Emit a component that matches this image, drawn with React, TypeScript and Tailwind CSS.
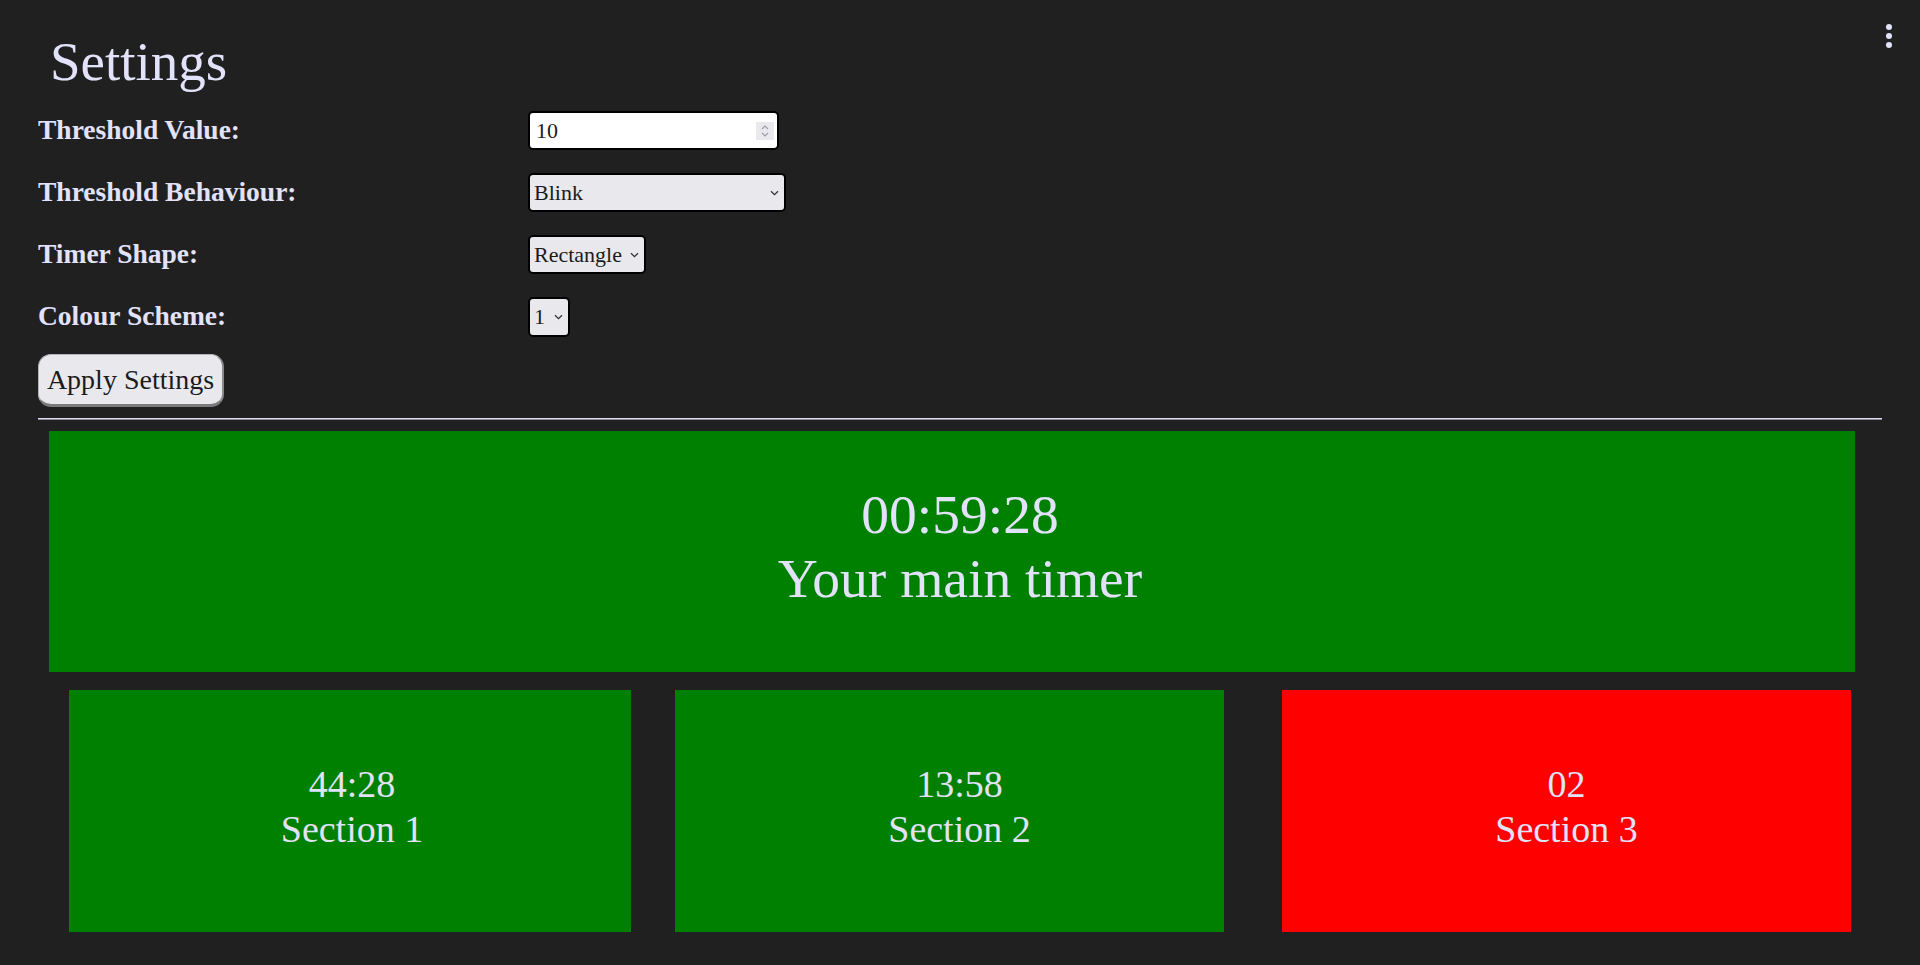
// @ts-nocheck
import React from 'react';

const Chevron = () => (
  <svg width="9" height="6" viewBox="0 0 9 6" className="text-[#333]">
    <path d="M1 1.2 L4.5 4.6 L8 1.2" fill="none" stroke="currentColor" strokeWidth="1.3" />
  </svg>
);

const fieldRows = [
  { id: 'value', label: 'Threshold Value:' },
  { id: 'behaviour', label: 'Threshold Behaviour:' },
  { id: 'shape', label: 'Timer Shape:' },
  { id: 'scheme', label: 'Colour Scheme:' },
];

const FakeSelect = ({ value, width, height }) => (
  <div
    className={`relative flex items-center border-2 border-black rounded-[5px] bg-[#e9e9ed] text-[#1b1b1b] text-[22px] pl-[4px] ${width} ${height}`}
  >
    <span className="flex-1 leading-none whitespace-nowrap">{value}</span>
    <span className="pr-[5px] flex items-center">
      <Chevron />
    </span>
  </div>
);

const sections = [
  { time: '44:28', name: 'Section 1', bg: 'bg-[#008000]', w: 'w-[562px]', ml: 'ml-0', pl: 'pl-[4px]' },
  { time: '13:58', name: 'Section 2', bg: 'bg-[#008000]', w: 'w-[549px]', ml: 'ml-[44px]', pl: 'pl-[20px]' },
  { time: '02', name: 'Section 3', bg: 'bg-[#ff0000]', w: 'w-[569px]', ml: 'ml-[58px]', pl: 'pl-0' },
];

export default function App() {
  const renderControl = (id) => {
    if (id === 'value') {
      return (
        <div className="flex items-center w-[251px] h-[39px] border-2 border-black rounded-[5px] bg-white pl-[6px] pr-[3px]">
          <input
            type="text"
            defaultValue="10"
            className="flex-1 min-w-0 bg-transparent outline-none text-[22px] text-[#1b1b1b] font-['Liberation_Serif',serif]"
          />
          {/* number spinner */}
          <div className="w-[18px] h-[18px] bg-[#e9e9ed] flex flex-col items-center justify-center gap-[2px]">
            <svg width="8" height="5" viewBox="0 0 8 5">
              <path d="M1 4 L4 1 L7 4" fill="none" stroke="#9a9aa5" strokeWidth="1.1" />
            </svg>
            <svg width="8" height="5" viewBox="0 0 8 5">
              <path d="M1 1 L4 4 L7 1" fill="none" stroke="#9a9aa5" strokeWidth="1.1" />
            </svg>
          </div>
        </div>
      );
    }
    if (id === 'behaviour') return <FakeSelect value="Blink" width="w-[258px]" height="h-[39px]" />;
    if (id === 'shape') return <FakeSelect value="Rectangle" width="w-[118px]" height="h-[39px]" />;
    return <FakeSelect value="1" width="w-[42px]" height="h-[40px]" />;
  };

  return (
    <div className="min-h-screen w-full bg-[#202020] text-[#e2e2fa] font-['Liberation_Serif',serif] relative">
      {/* kebab menu */}
      <div className="absolute top-[24px] right-[28px] flex flex-col gap-[3px]">
        <span className="w-[6px] h-[6px] rounded-full bg-[#e2e2fa]" />
        <span className="w-[6px] h-[6px] rounded-full bg-[#e2e2fa]" />
        <span className="w-[6px] h-[6px] rounded-full bg-[#e2e2fa]" />
      </div>

      {/* Settings panel */}
      <div className="pl-[38px] pr-[38px] pt-[31px]">
        <h1 className="text-[55px] leading-[62px] font-normal pl-[12px] mb-[18px]">Settings</h1>

        <div className="flex flex-col gap-[23px]">
          {fieldRows.map((row) => (
            <div key={row.id} className="flex items-start h-[39px]">
              <label className="w-[490px] text-[27.5px] leading-[31px] font-bold pt-[3px]">{row.label}</label>
              {renderControl(row.id)}
            </div>
          ))}
        </div>

        <button className="mt-[18px] w-[186px] h-[53px] rounded-[13px] bg-[#e9e9ed] text-[#1b1b1b] text-[28px] border border-[#b5b5bd] border-r-2 border-r-[#8a8a8a] border-b-[3px] border-b-[#7a7a7a]">
          Apply Settings
        </button>

        <div className="mt-[11px] h-[2px] border-t border-[#dcdcf0] border-b border-b-[#8a8a9a]" />
      </div>

      {/* Main timer */}
      <div className="mt-[11px] ml-[49px] w-[1806px] h-[241px] bg-[#008000] flex flex-col items-center justify-center pl-[16px] pb-[9px]">
        <div className="text-[55.5px] leading-[64px]">00:59:28</div>
        <div className="text-[55.5px] leading-[64px]">Your main timer</div>
      </div>

      {/* Section timers */}
      <div className="flex mt-[18px] pl-[69px]">
        {sections.map((s) => (
          <div
            key={s.name}
            className={`${s.bg} ${s.w} ${s.ml} ${s.pl} h-[242px] flex flex-col items-center justify-center pb-[8px]`}
          >
            <div className="text-[38px] leading-[45px]">{s.time}</div>
            <div className="text-[38px] leading-[45px]">{s.name}</div>
          </div>
        ))}
      </div>
    </div>
  );
}
